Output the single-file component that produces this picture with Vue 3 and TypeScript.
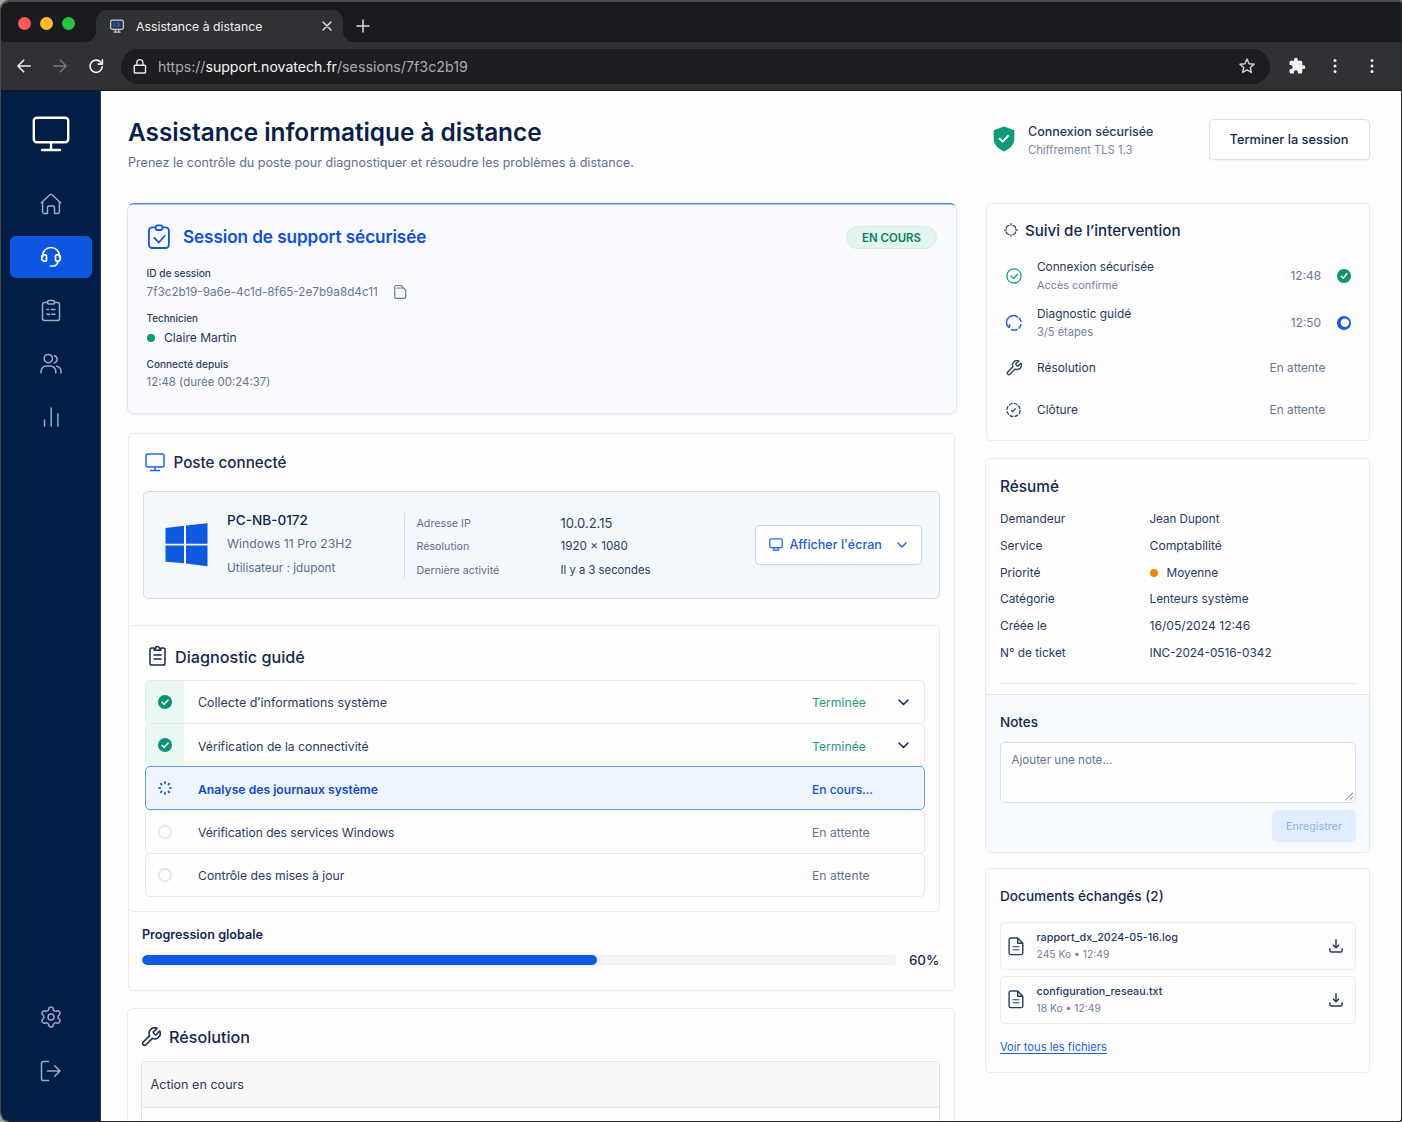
<script setup lang="ts">
import { ref } from 'vue'

interface NavItem { id: string; label: string; paths: string[] }
interface Step { label: string; status: string; state: 'done' | 'active' | 'pending' }
interface Field { label: string; value: string; dot?: boolean }

const WRENCH = 'M14.7 6.3a1 1 0 0 0 0 1.4l1.6 1.6a1 1 0 0 0 1.4 0l3.77-3.77a6 6 0 0 1-7.94 7.94l-6.91 6.91a2.12 2.12 0 0 1-3-3l6.91-6.91a6 6 0 0 1 7.94-7.94l-3.76 3.76z'

const mainNav: NavItem[] = [
  { id: 'home', label: 'Accueil', paths: ['M2.3 10.8 10.9 2.7a1.6 1.6 0 0 1 2.2 0l8.6 8.1', 'M3.6 9.8v10a1.6 1.6 0 0 0 1.6 1.6h3.3v-6.2a1.3 1.3 0 0 1 1.3-1.3h4.4a1.3 1.3 0 0 1 1.3 1.3v6.2h3.3a1.6 1.6 0 0 0 1.6-1.6v-10'] },
  { id: 'support', label: 'Assistance', paths: ['M3.6 12V10.900a8.400 8.400 0 0 1 16.800 0V12', 'M5 9.800h1.300a1.200 1.200 0 0 1 1.200 1.200v4a1.200 1.200 0 0 1-1.200 1.200h-.8a2.800 2.800 0 0 1-2.800-2.800v-1.300a2.300 2.300 0 0 1 2.300-2.300z', 'M19 9.800h-1.300a1.200 1.200 0 0 0-1.200 1.200v4a1.200 1.200 0 0 0 1.200 1.200h.8a2.800 2.800 0 0 0 2.800-2.800v-1.300a2.300 2.300 0 0 0-2.300-2.300z', 'M18.800 16.500a4.600 4.600 0 0 1-4.300 4.500h-3.100'] },
  { id: 'tasks', label: 'Interventions', paths: ['M8.500 3.500H5.400A1.900 1.900 0 0 0 3.500 5.400v14.200A1.900 1.900 0 0 0 5.400 21.500h13.200a1.900 1.900 0 0 0 1.900-1.900V5.400A1.900 1.900 0 0 0 18.600 3.500h-3.100', 'M10 1.400h4a1.500 1.500 0 0 1 1.500 1.500v.7A1.500 1.500 0 0 1 14 5.100h-4a1.500 1.500 0 0 1-1.500-1.500v-.7A1.500 1.500 0 0 1 10 1.400z', 'M8 10.500h1.500M12.500 10.500h3.500M8 15l1.500.8 1-.9M12.500 15.200h3.500'] },
  { id: 'users', label: 'Utilisateurs', paths: ['M9.300 2.400a4.200 4.200 0 1 1 0 8.400a4.200 4.200 0 0 1 0-8.400z', 'M2 21v-1.500a5.500 5.500 0 0 1 5.500-5.500h3.800a5.500 5.500 0 0 1 5.500 5.500v1.500', 'M15.300 3.700a3.700 3.700 0 0 1 0 7.200', 'M17.500 14.300a5.400 5.400 0 0 1 4.500 5.300v1.400'] },
  { id: 'stats', label: 'Statistiques', paths: ['M5.500 15v6M12.200 3v18M18.900 9v12'] },
]
const footNav: NavItem[] = [
  { id: 'settings', label: 'Paramètres', paths: ['M9.671 4.136a2.340 2.340 0 0 1 4.659 0 2.340 2.340 0 0 0 3.319 1.915 2.340 2.340 0 0 1 2.330 4.033 2.340 2.340 0 0 0 0 3.831 2.340 2.340 0 0 1-2.330 4.033 2.340 2.340 0 0 0-3.319 1.915 2.340 2.340 0 0 1-4.659 0 2.340 2.340 0 0 0-3.320-1.915 2.340 2.340 0 0 1-2.330-4.033 2.340 2.340 0 0 0 0-3.831A2.340 2.340 0 0 1 6.350 6.051a2.340 2.340 0 0 0 3.319-1.915', 'M12 9a3 3 0 1 1 0 6a3 3 0 0 1 0-6z'] },
  { id: 'logout', label: 'Quitter', paths: ['M9.500 2.500H4.300A1.800 1.800 0 0 0 2.500 4.300v15.400a1.800 1.800 0 0 0 1.800 1.800h5.200', 'M8.500 12h12.500M15.700 6.700 21 12l-5.300 5.300'] },
]
const activeNav = ref('support')

const steps: Step[] = [
  { label: 'Collecte d’informations système', status: 'Terminée', state: 'done' },
  { label: 'Vérification de la connectivité', status: 'Terminée', state: 'done' },
  { label: 'Analyse des journaux système', status: 'En cours...', state: 'active' },
  { label: 'Vérification des services Windows', status: 'En attente', state: 'pending' },
  { label: 'Contrôle des mises à jour', status: 'En attente', state: 'pending' },
]
const progress = 60.3

const fields: Field[] = [
  { label: 'Demandeur', value: 'Jean Dupont' },
  { label: 'Service', value: 'Comptabilité' },
  { label: 'Priorité', value: 'Moyenne', dot: true },
  { label: 'Catégorie', value: 'Lenteurs système' },
  { label: 'Créée le', value: '16/05/2024 12:46' },
  { label: 'N° de ticket', value: 'INC-2024-0516-0342' },
]
const files = [
  { name: 'rapport_dx_2024-05-16.log', meta: '245 Ko • 12:49' },
  { name: 'configuration_reseau.txt', meta: '18 Ko • 12:49' },
]
</script>

<template>
  <div class="window">
    <div class="tabs">
      <div class="lights"><i class="red"></i><i class="yellow"></i><i class="green"></i></div>
      <div class="tab">
        <svg class="favicon" width="16" height="16" viewBox="0 0 16 16" fill="none" stroke="#c9cdd6" stroke-width="1.200" stroke-linecap="round" stroke-linejoin="round"><rect x="1.600" y="2.100" width="12.800" height="9.300" rx="1.800" fill="#26365f" /><path d="M4.800 14.100h6.400M6.300 11.600v2.300M9.700 11.600v2.300" /><path d="M5 5v3.500M7.500 5h2.500v3H8" stroke="#5673b5" stroke-width=".8" /></svg>
        <span>Assistance à distance</span>
        <svg class="close" width="10" height="10" viewBox="0 0 10 10" stroke="#e8e9eb" stroke-width="1.400" stroke-linecap="round"><path d="M1 1l8 8M9 1l-8 8" /></svg>
      </div>
      <svg class="plus" width="14" height="14" viewBox="0 0 14 14" stroke="#dcdde0" stroke-width="1.500" stroke-linecap="round"><path d="M7 1v12M1 7h12" /></svg>
    </div>
    <div class="toolbar">
      <svg class="back" width="16" height="16" viewBox="0 0 16 16" fill="none" stroke="#eceded" stroke-width="1.600" stroke-linecap="round" stroke-linejoin="round"><path d="M14.300 8H2M7.700 2.200 1.900 8l5.800 5.800" /></svg>
      <svg class="fwd" width="16" height="16" viewBox="0 0 16 16" fill="none" stroke="#77797e" stroke-width="1.500" stroke-linecap="round" stroke-linejoin="round"><path d="M1.700 8H14M8.300 2.200 14.100 8l-5.800 5.800" /></svg>
      <svg class="reload" width="16" height="16" viewBox="0 0 16 16" fill="none" stroke="#f3f3f4" stroke-width="1.600" stroke-linecap="round" stroke-linejoin="round"><path d="M14.200 8.800A6.100 6.100 0 1 1 12.800 4.300L14.300 5.800M14.400 1.900V6.100H10.200" /></svg>
      <div class="url">
        <svg width="14" height="17" viewBox="0 0 14 17" fill="none" stroke="#e6e7e9" stroke-width="1.400" stroke-linejoin="round"><rect x="1.300" y="7.200" width="11.200" height="7.800" rx=".8" /><path d="M3.900 7V4.600a3 3 0 0 1 6 0V7" /></svg>
        <span class="address">https://<b>support.novatech.fr</b><span>/sessions/7f3c2b19</span></span>
        <svg class="star" width="18" height="18" viewBox="0 0 24 24" fill="none" stroke="#d3d4d7" stroke-width="1.900" stroke-linejoin="round"><path d="M12 2.800l2.750 6.100 6.650.7-4.950 4.450 1.400 6.550L12 17.250 6.150 20.600l1.400-6.550L2.600 9.600l6.650-.7z" /></svg>
      </div>
      <svg class="puzzle" width="18" height="18" viewBox="0 0 24 24" fill="#f1f1f2"><path d="M20.500 11H19V7c0-1.100-.9-2-2-2h-4V3.500a2.500 2.500 0 0 0-5 0V5H4c-1.100 0-1.990.9-1.990 2v3.800H3.500a2.700 2.700 0 0 1 0 5.400H2V20c0 1.100.9 2 2 2h3.800v-1.500a2.700 2.700 0 0 1 5.400 0V22H17c1.100 0 2-.9 2-2v-4h1.500a2.500 2.500 0 0 0 0-5z" /></svg>
      <svg class="dots" width="4" height="16" viewBox="0 0 4 16" fill="#eeeeef"><circle cx="2" cy="2.400" r="1.500" /><circle cx="2" cy="8" r="1.500" /><circle cx="2" cy="13.600" r="1.500" /></svg>
      <svg class="dots last" width="4" height="16" viewBox="0 0 4 16" fill="#eeeeef"><circle cx="2" cy="2.400" r="1.500" /><circle cx="2" cy="8" r="1.500" /><circle cx="2" cy="13.600" r="1.500" /></svg>
    </div>

    <div class="app">
      <aside class="sidebar">
        <svg class="logo" width="38" height="36" viewBox="0 0 38 36" fill="none" stroke="#fff" stroke-width="2.400" stroke-linecap="round"><rect x="1.800" y="1.800" width="34.400" height="24.500" rx="3" /><path d="M19 27v6M10 34h18" /></svg>
        <nav>
          <a v-for="n in mainNav" :key="n.id" :class="{ active: n.id === activeNav }" :aria-label="n.label" @click="activeNav = n.id">
            <svg width="24" height="24" viewBox="0 0 24 24"><path v-for="(p, i) in n.paths" :key="i" :d="p" /></svg>
          </a>
        </nav>
        <nav class="foot">
          <a v-for="n in footNav" :key="n.id" :aria-label="n.label"><svg width="24" height="24" viewBox="0 0 24 24"><path v-for="(p, i) in n.paths" :key="i" :d="p" /></svg></a>
        </nav>
      </aside>

      <main>
        <header>
          <div class="heading">
            <h1>Assistance informatique à distance</h1>
            <p>Prenez le contrôle du poste pour diagnostiquer et résoudre les problèmes à distance.</p>
          </div>
          <svg class="shield" width="22" height="26" viewBox="0 0 22 26"><path d="M11 .6 21.300 4.200v8.600c0 5.600-3.800 9.800-10.300 12.600C4.500 22.600.7 18.400.7 12.800V4.200z" fill="#0f9a7c" /><path d="M6.700 12.700l3 2.900 5.400-5.700" fill="none" stroke="#fff" stroke-width="2.100" stroke-linecap="round" stroke-linejoin="round" /></svg>
          <div class="secure"><strong>Connexion sécurisée</strong><small>Chiffrement TLS 1.3</small></div>
          <button class="end">Terminer la session</button>
        </header>

        <div class="columns">
          <div class="left">
            <section class="session">
              <div class="session-head">
                <svg width="24" height="26" viewBox="0 0 24 26" fill="none" stroke="#1254dc" stroke-width="1.800" stroke-linecap="round" stroke-linejoin="round"><path d="M8 3.400H5.200A3.300 3.300 0 0 0 1.900 6.700v14A3.300 3.300 0 0 0 5.200 24h13.400a3.300 3.300 0 0 0 3.300-3.300v-14a3.300 3.300 0 0 0-3.300-3.300H16" /><rect x="8.600" y="1.400" width="6.800" height="4.600" rx="1.700" /><path d="M7.400 13.800l4.400 4.700 5.800-6.500" /></svg>
                <h2>Session de support sécurisée</h2>
                <span class="badge">EN COURS</span>
              </div>
              <dl>
                <dt class="k1">ID de session</dt>
                <dd class="hash">7f3c2b19-9a6e-4c1d-8f65-2e7b9a8d4c11
                  <svg width="14" height="16" viewBox="0 0 14 16" fill="none" stroke="#6d7b98" stroke-width="1.200" stroke-linecap="round" stroke-linejoin="round"><path d="M5.800 4h4.700L12.700 6v7a1.400 1.400 0 0 1-1.400 1.400H3.200A1.500 1.500 0 0 1 1.700 13V3A1.500 1.500 0 0 1 3.200 1.500h5.300l1.200 1.700" /><path d="M3.800 4h2" /></svg>
                </dd>
                <dt class="k2">Technicien</dt>
                <dd class="tech"><i class="dot green"></i>Claire Martin</dd>
                <dt class="k3">Connecté depuis</dt>
                <dd class="since">12:48 (durée 00:24:37)</dd>
              </dl>
            </section>

            <section class="card station">
              <h3 class="title-station">
                <svg width="20" height="19" viewBox="0 0 20 19" fill="none" stroke="#2563eb" stroke-width="1.500" stroke-linecap="round"><rect x="1" y="1" width="18" height="13" rx="1.500" /><path d="M10 14v3.300M5.500 17.600h9" /></svg>
                Poste connecté
              </h3>
              <div class="pc">
                <svg width="43" height="44" viewBox="0 0 43 44" fill="#0f58e0"><path d="M.5 5 19 2.800v17.900H.5zM21 2.600 42.500.3v20.400H21zM.5 22.500H19v17.700L.5 38.700zM21 22.500h21.500v20.800L21 40.500z" /></svg>
                <div class="pc-id"><strong>PC-NB-0172</strong><span class="os">Windows 11 Pro 23H2</span><span class="usr">Utilisateur : jdupont</span></div>
                <div class="pc-keys"><span>Adresse IP</span><span>Résolution</span><span>Dernière activité</span></div>
                <div class="pc-vals"><span class="ip">10.0.2.15</span><span class="res">1920 × 1080</span><span>Il y a 3 secondes</span></div>
                <button class="show">
                  <svg width="14" height="13" viewBox="0 0 14 13" fill="none" stroke="#2563eb" stroke-width="1.300" stroke-linecap="round"><rect x=".8" y=".8" width="12.400" height="8.800" rx="1.200" /><path d="M5 10v1.800M9 10v1.800M4 12.100h6" /></svg>
                  <span>Afficher l'écran</span>
                  <svg width="10" height="6" viewBox="0 0 10 6" fill="none" stroke="#2563eb" stroke-width="1.500" stroke-linecap="round" stroke-linejoin="round"><path d="M1 1l4 4 4-4" /></svg>
                </button>
              </div>

              <div class="diag">
                <h3>
                  <svg width="17" height="21" viewBox="0 0 17 21" fill="none" stroke="#17294f" stroke-width="1.500" stroke-linecap="round" stroke-linejoin="round"><path d="M5 3H2.800A1.800 1.800 0 0 0 1 4.800v13.400A1.800 1.800 0 0 0 2.800 20h11.400a1.800 1.800 0 0 0 1.800-1.800V4.800A1.800 1.800 0 0 0 14.200 3H12" /><path d="M5.200 5.200V3.700h1.200a2.100 2.100 0 0 1 4.200 0h1.200v1.500zM5 10h7M5 14h7" /></svg>
                  Diagnostic guidé
                </h3>
                <ul class="steps">
                  <li v-for="s in steps" :key="s.label" :class="s.state">
                    <span class="mark">
                      <svg v-if="s.state === 'done'" width="14" height="14" viewBox="0 0 14 14"><circle cx="7" cy="7" r="7" fill="#0d9275" /><path d="M4 7.200l2.100 2 4-4.200" fill="none" stroke="#fff" stroke-width="1.500" stroke-linecap="round" stroke-linejoin="round" /></svg>
                      <svg v-else-if="s.state === 'active'" width="14" height="14" viewBox="0 0 14 14" stroke="#1254dc" stroke-width="1.700" stroke-linecap="round"><path d="M7 .9v1.400M7 11.700v1.400M.9 7h1.400M11.700 7h1.400M2.700 2.700l.9.900M10.400 10.400l.9.900M11.300 2.700l-.9.900M3.600 10.400l-.9.900" /></svg>
                      <svg v-else width="14" height="14" viewBox="0 0 14 14"><circle cx="7" cy="7" r="6.200" fill="none" stroke="#dfe2ea" stroke-width="1.400" /></svg>
                    </span>
                    <span class="label">{{ s.label }}</span>
                    <span class="status">{{ s.status }}</span>
                    <svg v-if="s.state === 'done'" class="chev" width="11" height="7" viewBox="0 0 11 7" fill="none" stroke="#17294f" stroke-width="1.500" stroke-linecap="round" stroke-linejoin="round"><path d="M1 1l4.500 4.500L10 1" /></svg>
                  </li>
                </ul>
              </div>

              <div class="progress-label">Progression globale</div>
              <div class="progress"><div class="track"><div class="fill" :style="{ width: progress + '%' }"></div></div><span>60%</span></div>
            </section>

            <section class="card fix">
              <h3>
                <svg width="20" height="20" viewBox="1.200 1.200 21.600 21.600" fill="none" stroke="#17294f" stroke-width="1.700" stroke-linecap="round" stroke-linejoin="round"><path :d="WRENCH" /></svg>
                Résolution
              </h3>
              <div class="table"><div class="th">Action en cours</div></div>
            </section>
          </div>

          <div class="right">
            <section class="card track-card">
              <h3>
                <svg width="14" height="14" viewBox="0 0 14 14" fill="none" stroke="#3b4a6b" stroke-width="1.300" stroke-linecap="round"><path d="M5 2.300A3.600 3.600 0 0 0 2.300 5M9 2.300A3.600 3.600 0 0 1 11.700 5M5 11.700A3.600 3.600 0 0 1 2.300 9M9 11.700A3.600 3.600 0 0 0 11.700 9M7 .7v1.300M7 12v1.300M.7 7H2.200M11.800 7h1.500" /></svg>
                Suivi de l’intervention
              </h3>
              <div class="ev two">
                <svg width="16" height="16" viewBox="0 0 16 16" fill="none" stroke="#1b9c7e" stroke-width="1.300" stroke-linecap="round" stroke-linejoin="round"><path d="M8 .9c4.300 0 7 3 7 6.900s-2.300 7.200-7 7.200-7-3.300-7-7.200S3.700.9 8 .9z" /><path d="M4.900 7.900l2.600 2.600 4-4.200" /></svg>
                <div class="ev-text"><b class="t1">Connexion sécurisée</b><small class="s1">Accès confirmé</small></div>
                <time>12:48</time>
                <svg class="end-mark" width="14" height="14" viewBox="0 0 14 14"><circle cx="7" cy="7" r="7" fill="#0d9275" /><path d="M4.200 7.300l2 2 3.700-4.500" fill="none" stroke="#fff" stroke-width="1.600" stroke-linecap="round" stroke-linejoin="round" /></svg>
              </div>
              <div class="ev two">
                <svg width="16" height="16" viewBox="0 0 16 16" fill="none" stroke="#1d5fe6" stroke-width="1.500" stroke-linecap="round"><path d="M3.500 12.200V9.800M1.200 10.500A7 7 0 0 1 11.600 1.900M13.200 3.200a7 7 0 0 1 1.700 3.200M15 9.400a7.100 7.100 0 0 1-1.900 3.700M11 14.500a7.100 7.100 0 0 1-5.500.1M1.400 10.600l1.100 1.600" /></svg>
                <div class="ev-text"><b class="t2">Diagnostic guidé</b><small class="s2">3/5 étapes</small></div>
                <time>12:50</time>
                <svg class="end-mark" width="14" height="14" viewBox="0 0 14 14"><circle cx="7" cy="7" r="7" fill="#1457e2" /><circle cx="7.900" cy="6.700" r="4.300" fill="#fff" /></svg>
              </div>
              <div class="ev one fix-row">
                <svg width="16" height="16" viewBox="1.200 1.200 21.600 21.600" fill="none" stroke="#35446a" stroke-width="1.900" stroke-linecap="round" stroke-linejoin="round"><path :d="WRENCH" /></svg>
                <b class="t3">Résolution</b><em>En attente</em>
              </div>
              <div class="ev one">
                <svg width="16" height="16" viewBox="0 0 16 16" fill="none" stroke="#35446a" stroke-width="1.300" stroke-linejoin="round"><circle cx="7.500" cy="8" r="6.600" stroke-dasharray="4 1.184" /><path d="M5.600 8.700l1.300 1 2.500-3" stroke-linecap="round" /></svg>
                <b>Clôture</b><em>En attente</em>
              </div>
            </section>

            <section class="card summary">
              <h3>Résumé</h3>
              <div v-for="f in fields" :key="f.label" class="field"><span>{{ f.label }}</span><span><i v-if="f.dot" class="dot orange"></i>{{ f.value }}</span></div>
              <hr />
              <div class="notes">
                <h4>Notes</h4>
                <div class="area">Ajouter une note...
                  <svg width="9" height="9" viewBox="0 0 9 9" stroke="#70757f" stroke-width="1"><path d="M.5 8 8 .8M4.500 8 8 4.600" /></svg>
                </div>
                <button class="save">Enregistrer</button>
              </div>
            </section>

            <section class="card docs">
              <h4>Documents échangés (2)</h4>
              <div v-for="f in files" :key="f.name" class="file">
                <svg width="16" height="19" viewBox="0 0 16 19" fill="none" stroke="#2d3c62" stroke-width="1.400" stroke-linecap="round" stroke-linejoin="round"><path d="M9.700 1H2.800A1.700 1.700 0 0 0 1.100 2.700v13.200a1.700 1.700 0 0 0 1.700 1.700h10.300a1.700 1.700 0 0 0 1.700-1.700V6.200zM9.700 1v5.200h5.100" /><path d="M5 9.800h6M5 12.800h6" stroke-width="1.100" /></svg>
                <div><b>{{ f.name }}</b><small>{{ f.meta }}</small></div>
                <svg class="dl" width="14" height="14" viewBox="0 0 14 14" fill="none" stroke="#24345b" stroke-width="1.400" stroke-linecap="round" stroke-linejoin="round"><path d="M7 .8v7.800M4.300 6.100 7 8.800l2.700-2.700M.9 9.700v2a1.300 1.300 0 0 0 1.300 1.300h9.600a1.300 1.300 0 0 0 1.300-1.300v-2" /></svg>
              </div>
              <a class="all">Voir tous les fichiers</a>
            </section>
          </div>
        </div>
      </main>
    </div>
  </div>
</template>

<style>
body { background: #a3a49c; overflow: hidden; }
</style>

<style scoped>
* { box-sizing: border-box; margin: 0; padding: 0; }
.window {
  width: 1402px; height: 1122px; overflow: hidden;
  display: flex; flex-direction: column;
  border: solid #47494c; border-width: 2px 1px 1px 1px; border-right-color: #26292d; border-bottom-color: #26292d;
  border-radius: 9px 3px 3px 9px; background: #fdfdfe;
  font-family: Inter, "Liberation Sans", sans-serif; color: #22335c; font-size: 12px;
}
svg { flex: none; display: block; }
b, strong, em, small { font-weight: 400; font-style: normal; display: block; }
button { font: inherit; color: inherit; cursor: pointer; }
ul { list-style: none; }

/* browser chrome */
.tabs { height: 40px; flex: none; display: flex; align-items: flex-end; background: #1a1b1e; }
.lights { display: flex; gap: 9px; align-self: flex-start; padding: 15px 0 0 17px; width: 95px; }
.lights i { width: 13px; height: 13px; border-radius: 50%; }
.red { background: #fc5b57; } .yellow { background: #fbbc2d; } .lights .green { background: #28c63f; }
.tab { position: relative; width: 247px; height: 32px; border-radius: 11px 11px 0 0; background: #303135; display: flex; align-items: center; padding: 0 12px 0 13px; color: #eeeeef; font-size: 12.28px; }
.tab::before, .tab::after { content: ""; position: absolute; bottom: 0; width: 10px; height: 10px; }
.tab::before { left: -10px; background: radial-gradient(circle at 0 0, transparent 9.500px, #303135 10px); }
.tab::after { right: -10px; background: radial-gradient(circle at 100% 0, transparent 9.500px, #303135 10px); }
.tab span { margin-left: 11px; }
.close { margin-left: auto; margin-right: -1px; }
.plus { margin: 0 0 9px 13px; }
.toolbar { height: 49px; flex: none; display: flex; align-items: center; background: #303135; border-bottom: 1px solid #17181a; }
.back { margin-left: 15px; } .fwd { margin-left: 20px; } .reload { margin-left: 20px; }
.url { width: 1149px; height: 35px; margin-left: 17px; border-radius: 18px; background: #1d1e21; display: flex; align-items: center; padding: 0 14px 0 12px; }
.address { margin-left: 11px; font-size: 14.090px; color: #a9abb0; white-space: nowrap; }
.address b { display: inline; color: #f5f5f6; }
.address span { font-size: 14.260px; }
.star { margin-left: auto; }
.puzzle { margin-left: 18px; }
.dots { margin-left: 27px; } .dots.last { margin-left: 33px; }

/* shell */
.app { flex: 1; min-height: 0; display: flex; }
.sidebar { width: 100px; flex: none; display: flex; flex-direction: column; align-items: center; background: #031d45; border-right: 1px solid #233b62; padding: 25px 0 0 0; }
.logo { margin-bottom: 31px; }
nav { display: flex; flex-direction: column; gap: 11.300px; }
nav a { width: 82px; height: 42px; display: flex; align-items: center; justify-content: center; border-radius: 6px; }
nav svg { fill: none; stroke: #9aa9c4; stroke-width: 1.500; stroke-linecap: round; stroke-linejoin: round; }
nav a.active { background: #0c56e2; } nav a.active svg { stroke: #fff; stroke-width: 1.700; }
nav.foot { margin-top: auto; margin-bottom: 29px; gap: 12px; }
main { flex: 1; min-width: 0; padding: 0 31px 0 26px; overflow: hidden; }

header { height: 112px; display: flex; align-items: flex-start; }
.heading { flex: 1; padding: 25px 0 0 1px; }
h1 { font-size: 24.420px; font-weight: 600; line-height: 33px; color: #0b1f4a; letter-spacing: -.04px; }
.heading p { font-size: 12.580px; line-height: 20px; margin-top: 4px; color: #61708f; }
.shield { margin-top: 35px; }
.secure { width: 194px; padding: 32px 0 0 13px; }
.secure strong { font-size: 12.480px; font-weight: 500; line-height: 18px; color: #263962; }
.secure small { font-size: 11.250px; line-height: 18px; color: #7c89a8; }
.end { width: 161px; height: 41px; margin-top: 28px; border: 1px solid #dcdfeb; border-radius: 5px; background: #fff; font-size: 12.810px; font-weight: 500; line-height: 20px; padding: 1px 1px 0 0; color: #15284f; box-shadow: 0 1px 2px rgba(20, 40, 90, .05); }

.columns { display: flex; gap: 29px; align-items: flex-start; }
.left { width: 830px; flex: none; }
.right { flex: 1; }
.card { border: 1px solid #e8eaf2; border-radius: 5px; background: #fdfdfe; }
h2, h3, h4 { font-weight: 500; }
h3, h4 { color: #15284f; }
h3 { display: flex; align-items: center; }

/* session */
.session { height: 211px; border: 1px solid #dfe5f1; border-top-color: #4a86f2; border-radius: 7px; background: linear-gradient(#a9c6f9 0 .6px, #f8fafe 1px); padding: 19px 19px 0 19px; box-shadow: 0 1px 2px rgba(40, 70, 130, .08); }
.session-head { display: flex; align-items: center; height: 27px; }
h2 { font-size: 17.120px; font-weight: 600; color: #0f50d8; margin-left: 12px; letter-spacing: -.06px; }
.badge { margin-left: auto; width: 91px; height: 23px; margin-top: 2px; border-radius: 12px; background: #e2f5ef; border: 1px solid #d2efe5; color: #0a7f64; font-size: 11.400px; font-weight: 600; display: flex; align-items: center; justify-content: center; }
dl { margin-left: -.5px; }
dt { font-size: 10.080px; font-weight: 500; line-height: 14px; color: #2e3d61; }
dd { color: #69768f; line-height: 18px; display: flex; align-items: center; }
.k1 { margin-top: 16px; }
.hash { font-size: 11.730px; margin-top: 3px; } .hash svg { margin-left: 15px; }
.k2 { margin-top: 10px; font-size: 9.900px; }
.tech { font-size: 12.050px; margin-top: 4px; color: #263760; }
.dot { width: 8px; height: 8px; border-radius: 50%; display: inline-block; }
.dot.green { background: #0f9a78; margin-right: 9.500px; }
.k3 { margin-top: 10px; }
.since { font-size: 11.440px; margin-top: 2px; }

/* station */
.station { margin: 19px 0 0 1px; width: 827px; height: 558px; padding: 0 14px 0 0; }
.title-station { height: 57px; padding-left: 16px; font-size: 15.210px; }
.title-station svg { margin-right: 8.500px; }
.pc { width: 797px; height: 108px; margin-left: 14px; border: 1px solid #cfdcf0; border-radius: 5px; background: #f3f8fd; display: flex; align-items: center; padding: 0 17px 0 21px; }
.pc-id { width: 176.500px; margin-left: 19px; height: 72px; margin-top: -1px; }
.pc-id strong { font-size: 13.590px; font-weight: 500; color: #101f44; line-height: 23px; }
.pc-id > * { display: block; line-height: 24px; }
.os { font-size: 12.260px; color: #5f6d8c; } .usr { font-size: 11.820px; color: #5f6d8c; }
.pc-keys { width: 157px; height: 66px; border-left: 1px solid #d7deee; padding: 0 0 0 12px; margin-top: 2px; }
.pc-keys span { display: block; font-size: 10.690px; line-height: 23.500px; color: #5f6d8c; position: relative; top: -1.500px; }
.pc-vals { margin-top: 4px; color: #2d3c60; }
.pc-vals span { display: block; line-height: 23.500px; font-size: 11.290px; }
.pc-vals .ip { font-size: 13px; } .pc-vals .res { font-size: 11.680px; }
.show { margin-left: auto; width: 167px; height: 40px; border: 1px solid #ccd6ea; border-radius: 5px; background: #fff; display: flex; align-items: center; color: #1d5be0; font-size: 12.560px; font-weight: 500; padding: 0 14px 1px 13px; box-shadow: 0 1px 1px rgba(40, 70, 130, .05); }
.show span { margin-left: 6.500px; } .show svg:last-child { margin-left: auto; }

.diag { width: 812px; height: 287px; margin: 26px 0 0 -1px; border: 1px solid #e8eaf2; border-radius: 5px; padding: 0 14px 0 16px; }
.diag h3 { height: 54px; padding: 7px 0 0 4px; font-size: 16.210px; }
.diag h3 svg { margin: -2px 9px 0 0; }
.steps li { position: relative; height: 44px; margin-bottom: -.8px; border: 1px solid #e5e8f0; border-radius: 5px; display: flex; align-items: center; font-size: 12.200px; overflow: hidden; }
.mark { width: 38px; height: 100%; display: flex; align-items: center; justify-content: center; margin-right: 14px; }
.done .mark { background: #eaf8f3; }
.label { flex: 1; color: #2b3b62; padding-top: 1px; }
li:nth-child(1) .label { font-size: 12.460px; } li:nth-child(4) .label { font-size: 12.070px; }
li:nth-child(2) > span:not(.mark), li:nth-child(3) > span:not(.mark) { padding-top: 2px; }
.status { width: 112px; color: #67748f; padding-top: 1px; }
.done .status { color: #2a9a7e; }
.chev { position: absolute; right: 15px; }
.steps .active { z-index: 1; border-color: #6b9cf2; background: #eef5fe; }
.active .label { font-size: 12.160px; font-weight: 600; color: #0f49c8; }
.active .status { font-size: 11.990px; font-weight: 500; color: #1254dc; }

.progress-label { margin: 13px 0 0 13px; line-height: 20px; font-size: 12.590px; font-weight: 600; color: #15284f; }
.progress { margin: 5px 0 0 13px; display: flex; align-items: center; height: 20px; }
.track { width: 755px; height: 10px; border-radius: 5px; background: #f1f2f5; overflow: hidden; }
.fill { height: 100%; border-radius: 5px; background: #1059e3; }
.progress span { margin-left: 12px; font-size: 13.440px; color: #17294f; font-weight: 500; letter-spacing: -.1px; }

.fix { margin: 17px 0 0 0; width: 828px; height: 150px; padding: 0 13px; }
.fix h3 { height: 52px; font-size: 16.150px; padding-top: 4px; }
.fix h3 svg { margin-right: 8px; }
.table { width: 799px; height: 100px; border: 1px solid #dfe2e8; border-radius: 4px 4px 0 0; overflow: hidden; }
.th { height: 46px; background: #f8f8f9; border-bottom: 1px solid #dfe2e8; font-size: 12.600px; line-height: 45px; padding-left: 8.500px; color: #2a3a60; }

/* right column */
.track-card { height: 238px; padding: 0 18px 0 17px; }
.track-card h3 { font-size: 15.080px; height: 54px; margin-top: -1px; }
.track-card h3 svg { margin-right: 7px; }
.ev { display: flex; align-items: center; padding-left: 2px; }
.ev b { color: #293a62; font-size: 11.900px; }
.ev > b, .ev-text { margin-left: 15px; flex: 1; }
.two { height: 47px; padding-bottom: 10px; }
.ev-text > * { line-height: 18.400px; }
.ev-text { padding-top: 1px; }
.ev small { color: #75829f; }
.ev .t1 { font-size: 11.780px; } .s1 { font-size: 10.870px; } .s2 { font-size: 11.050px; }
.ev time { font-size: 11.870px; color: #6a7897; margin-right: 16px; }
.one { height: 42.300px; line-height: 16px; }
.fix-row { margin-top: -4.500px; }
.one em { font-size: 11.840px; color: #6a7897; margin-right: 25.500px; }

.summary { margin: 17px 0 0 -1px; height: 395px; padding-top: 13px; overflow: hidden; }
.summary h3 { font-size: 15.370px; height: 28px; padding-left: 14px; margin-bottom: 6px; }
.field { display: flex; height: 26.800px; line-height: 26.800px; padding-left: 14px; font-size: 11.800px; color: #293a62; }
.field span:first-child { width: 149.500px; font-size: 11.850px; }
.field:nth-of-type(1) span:last-child { font-size: 11.590px; }
.field:nth-of-type(2) span:last-child { font-size: 12.180px; }
.field:nth-of-type(5) span:last-child { font-size: 12.140px; }
.field .orange { background: #ee8610; margin-right: 9px; }
hr { border: 0; border-top: 1px solid #e6e9f1; margin: 16.500px 13px 0 14px; }
.notes { margin-top: 10px; height: 159px; border-top: 1px solid #dde5f2; background: #f6fafe; padding: 13px 13px 0 14px; }
h4 { font-size: 13.490px; line-height: 28px; }
.area { position: relative; height: 61px; margin-top: 6px; border: 1px solid #d8dde9; border-radius: 5px; background: #fefefe; padding: 8px 10.500px; font-size: 11.630px; line-height: 18px; color: #66738f; }
.area svg { position: absolute; right: 1px; bottom: 1px; }
.save { display: block; width: 84px; height: 32px; margin: 7px 0 0 auto; border: 0; border-radius: 5px; background: #e2eefd; color: #8bb3f3; font-size: 10.840px; }

.docs { margin: 15px 0 0 -1px; height: 205px; padding: 13px 13px 0 14px; }
.docs h4 { font-size: 13.640px; margin-bottom: 12px; }
.file { height: 48px; margin-bottom: 5.800px; border: 1px solid #e8ebf3; border-radius: 5px; display: flex; align-items: center; padding: 0 12px 0 7px; }
.file div { flex: 1; margin-left: 12.500px; }
.file b { font-size: 10.770px; font-weight: 500; line-height: 17px; color: #293a62; }
.file small { font-size: 10.340px; line-height: 17px; color: #75829f; }
.all { display: block; margin-top: 8px; line-height: 30px; font-size: 11.150px; color: #1f5fe0; text-decoration: underline; text-underline-offset: 2px; }
</style>
